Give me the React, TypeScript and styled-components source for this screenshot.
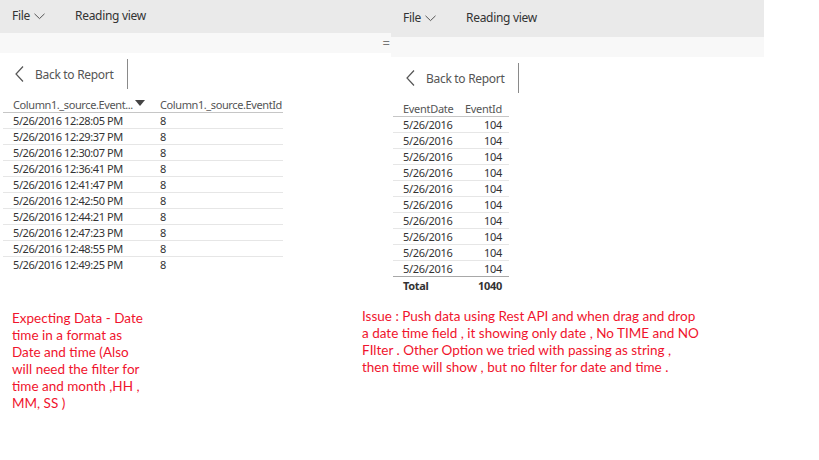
import styled, { createGlobalStyle } from "styled-components";

const GlobalStyle = createGlobalStyle`
  html, body {
    margin: 0;
    padding: 0;
    background: #ffffff;
  }
  body {
    width: 819px;
    height: 460px;
    overflow: hidden;
    font-family: "Noto Sans", "Open Sans", sans-serif;
    color: #333333;
  }
`;

const leftRows = [
  "5/26/2016 12:28:05 PM",
  "5/26/2016 12:29:37 PM",
  "5/26/2016 12:30:07 PM",
  "5/26/2016 12:36:41 PM",
  "5/26/2016 12:41:47 PM",
  "5/26/2016 12:42:50 PM",
  "5/26/2016 12:44:21 PM",
  "5/26/2016 12:47:23 PM",
  "5/26/2016 12:48:55 PM",
  "5/26/2016 12:49:25 PM",
];

function ChevronDown() {
  return (
    <svg width="11" height="7" viewBox="0 0 11 7">
      <polyline points="0.5,0.8 5.5,5.6 10.5,0.8" fill="none" stroke="#555" strokeWidth="1" />
    </svg>
  );
}

function ChevronLeft() {
  return (
    <svg width="9" height="16" viewBox="0 0 9 16">
      <polyline points="8,0.5 1,8 8,15.5" fill="none" stroke="#555" strokeWidth="1.2" />
    </svg>
  );
}

function SortArrow() {
  return (
    <svg width="10" height="6" viewBox="0 0 10 6">
      <polygon points="0,0 10,0 5,6" fill="#444" />
    </svg>
  );
}

function TopChrome({ barHeight, splitter }: { barHeight: number; splitter?: boolean }) {
  return (
    <>
      <StMenuBar $height={barHeight}>
        <StMenuItem>
          File <ChevronDown />
        </StMenuItem>
        <StMenuItem>Reading view</StMenuItem>
      </StMenuBar>
      <StStrip>{splitter ? <StSplitter>=</StSplitter> : null}</StStrip>
      <StBackBar>
        <StBackButton>
          <ChevronLeft />
          <span>Back to Report</span>
        </StBackButton>
        <StDivider />
      </StBackBar>
    </>
  );
}

export default function App() {
  return (
    <>
      <GlobalStyle />
      <StPage>
        <StShots>
          <StPanel $width={391}>
            <TopChrome barHeight={33} splitter />
            <StLeftTable>
              <StHeadCell $pad="0 15px 0 10px">
                <span>Column1._source.Event...</span>
                <SortArrow />
              </StHeadCell>
              <StHeadCell $pad="0">Column1._source.EventId</StHeadCell>
              {leftRows.map((d, i) => (
                <StRow key={d} $line={i === leftRows.length - 1 ? "transparent" : "#e6e6e6"}>
                  <span>{d}</span>
                  <span>8</span>
                </StRow>
              ))}
            </StLeftTable>
          </StPanel>
          <StPanel $width={373}>
            <TopChrome barHeight={37} />
            <StRightTable>
              <StHeadCell $pad="0 0 0 10px">EventDate</StHeadCell>
              <StHeadCell $pad="0 7px 0 0" $right>
                EventId
              </StHeadCell>
              {leftRows.map((d, i) => (
                <StRow key={d} $line={i === leftRows.length - 1 ? "#a8a8a8" : "#e6e6e6"}>
                  <span>5/26/2016</span>
                  <StNum>104</StNum>
                </StRow>
              ))}
              <StTotalRow>
                <span>Total</span>
                <StNum>1040</StNum>
              </StTotalRow>
            </StRightTable>
          </StPanel>
        </StShots>
        <StNotes>
          <StNote $width={350} $top={6}>
            Expecting Data - Date
            <br />
            time in a format as
            <br />
            Date and time (Also
            <br />
            will need the filter for
            <br />
            time and month ,HH ,
            <br />
            MM, SS )
          </StNote>
          <StNote $width={420} $top={4}>
            Issue : Push data using Rest API and when drag and drop
            <br />a date time field , it showing only date , No TIME and NO
            <br />
            FIlter . Other Option we tried with passing as string ,
            <br />
            then time will show , but no filter for date and time .
          </StNote>
        </StNotes>
      </StPage>
    </>
  );
}

const StPage = styled.div`
  display: flex;
  flex-direction: column;
  width: 819px;
  height: 460px;
`;

const StShots = styled.div`
  display: flex;
  align-items: flex-start;
  height: 304px;
`;

const StPanel = styled.section<{ $width: number }>`
  width: ${(p) => p.$width}px;
  display: flex;
  flex-direction: column;
`;

const StMenuBar = styled.div<{ $height: number }>`
  height: ${(p) => p.$height}px;
  background: #eaeaea;
  display: flex;
  align-items: center;
  gap: 30px;
  padding: 0 0 2px 12px;
  box-sizing: border-box;
`;

const StMenuItem = styled.div`
  display: flex;
  align-items: center;
  gap: 4px;
  font-size: 12px;
  letter-spacing: -0.3px;
  color: #333;
  svg {
    margin-top: 1px;
  }
`;

const StStrip = styled.div`
  height: 20px;
  background: #f8f8f8;
  display: flex;
  justify-content: flex-end;
  align-items: center;
`;

const StSplitter = styled.span`
  font-size: 13px;
  color: #777;
  line-height: 1;
  margin-right: 1px;
`;

const StBackBar = styled.div`
  display: flex;
  align-items: center;
  padding: 6px 0 0 15px;
  height: 30px;
`;

const StBackButton = styled.div`
  display: flex;
  align-items: center;
  gap: 11px;
  font-size: 12px;
  letter-spacing: -0.3px;
  color: #555;
  width: 112px;
`;

const StDivider = styled.div`
  width: 1px;
  height: 30px;
  background: #8a8a8a;
`;

const StLeftTable = styled.div`
  margin: 8px 0 0 3px;
  width: 280px;
  display: grid;
  grid-template-columns: 157px 123px;
  font-size: 11px;
  letter-spacing: -0.4px;
  color: #333;
`;

const StRightTable = styled.div`
  margin: 8px 0 0 2px;
  width: 116px;
  display: grid;
  grid-template-columns: 62px 54px;
  font-size: 11px;
  letter-spacing: -0.3px;
  color: #333;
`;

const StHeadCell = styled.div<{ $pad: string; $right?: boolean }>`
  height: 16px;
  line-height: 15px;
  border-bottom: 1px solid #c6c6c6;
  color: #555;
  padding: ${(p) => p.$pad};
  display: flex;
  align-items: center;
  justify-content: ${(p) => (p.$right ? "flex-end" : "space-between")};
  white-space: nowrap;
  overflow: hidden;
  box-sizing: border-box;
  svg {
    flex: none;
    margin-top: -3px;
  }
`;

const StRow = styled.div<{ $line: string }>`
  display: contents;
  & > span {
    height: 16px;
    line-height: 15px;
    box-sizing: border-box;
    border-bottom: 1px solid ${(p) => p.$line};
    white-space: nowrap;
  }
  & > span:first-child {
    padding-left: 10px;
  }
`;

const StNum = styled.span`
  text-align: right;
  padding-right: 7px;
`;

const StTotalRow = styled.div`
  display: contents;
  & > span {
    height: 16px;
    line-height: 17px;
    font-weight: bold;
    color: #333;
  }
  & > span:first-child {
    padding-left: 10px;
  }
`;

const StNotes = styled.div`
  display: flex;
  align-items: flex-start;
  padding-left: 12px;
`;

const StNote = styled.p<{ $width: number; $top: number }>`
  margin: ${(p) => p.$top}px 0 0;
  width: ${(p) => p.$width}px;
  font-family: "Lato", "Liberation Sans", sans-serif;
  font-size: 13.5px;
  line-height: 17px;
  color: #f0142d;
`;
